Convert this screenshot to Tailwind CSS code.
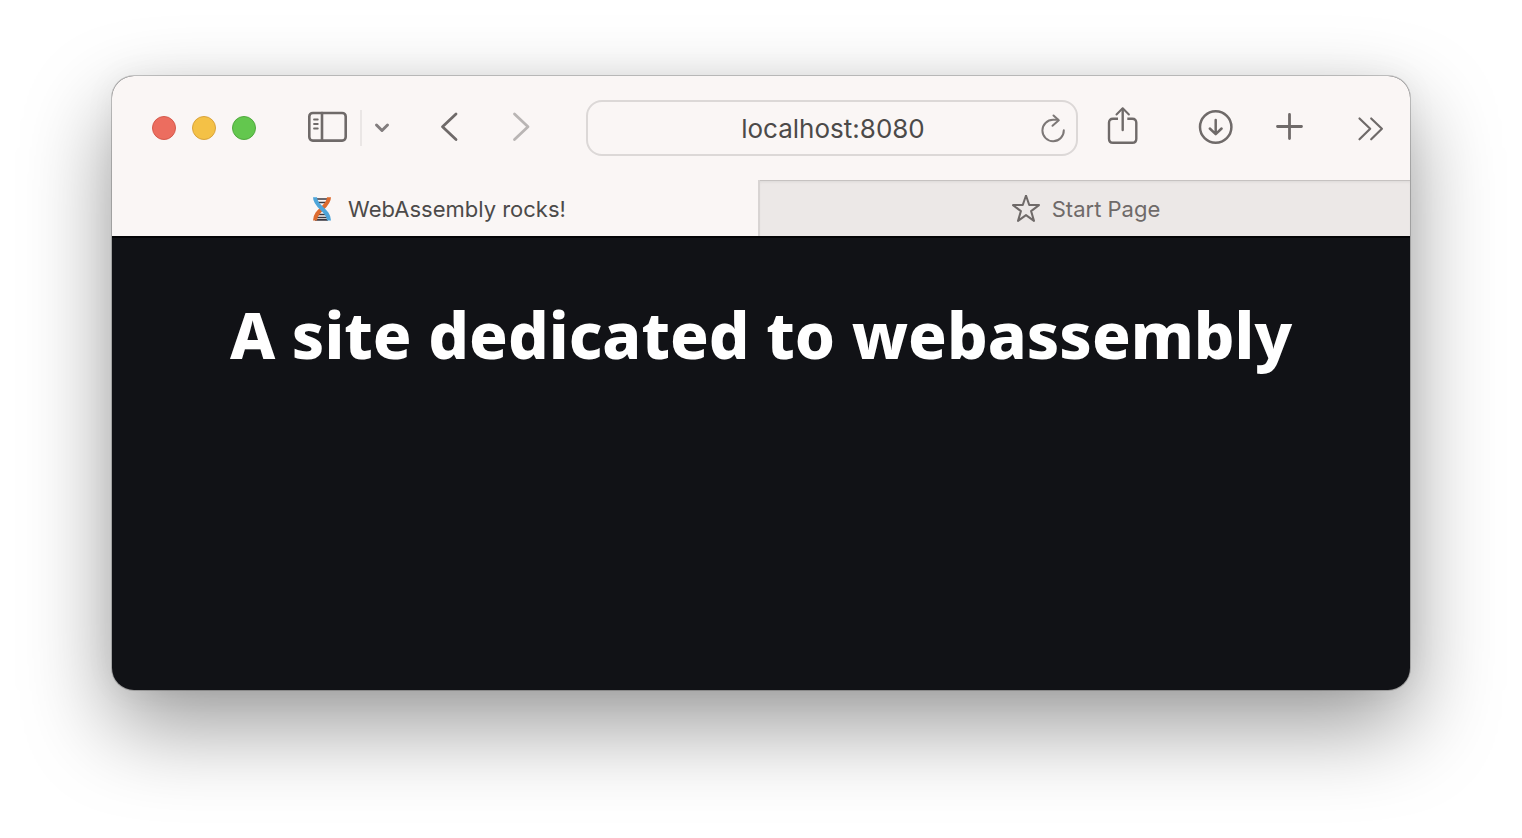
<!DOCTYPE html>
<html lang="en">
<head>
<meta charset="utf-8">
<meta name="viewport" content="width=device-width, initial-scale=1">
<title>WebAssembly rocks!</title>
<script src="https://cdn.jsdelivr.net/npm/@tailwindcss/browser@4"></script>
</head>
<body class="flex min-h-screen flex-col bg-white px-28 pt-[76px] pb-[148px] font-['Inter',sans-serif]">
<div class="flex flex-1 flex-col overflow-hidden rounded-[22px] bg-[#111216] shadow-[0_0_0_1px_rgba(0,0,0,0.2),0_36px_88px_0_rgba(0,0,0,0.4),0_0_32px_0_rgba(0,0,0,0.05)]">
  <header class="bg-[#faf6f5] text-[#6f6a69]">
    <div class="flex h-[104px] items-center pr-[25px] pl-10">
      <div class="flex gap-4">
        <button aria-label="Close" class="size-6 rounded-full border border-[#d55a4c] bg-[#ec6d5f]"></button>
        <button aria-label="Minimize" class="size-6 rounded-full border border-[#d9a33c] bg-[#f4c146]"></button>
        <button aria-label="Zoom" class="size-6 rounded-full border border-[#51a93f] bg-[#63c74e]"></button>
      </div>
      <button aria-label="Sidebar" class="ml-[52px]">
        <svg class="block h-11 w-10" viewBox="0 0 40 44" fill="none" stroke="currentColor" stroke-width="2.600" stroke-linecap="round"><rect x="1.300" y="7" width="36.400" height="27.600" rx="3.500"/><path d="M14 7v27.500"/><path stroke-width="1.800" d="M6 13.500h3.800M6 18h3.800M6 22.500h3.800"/></svg>
      </button>
      <div class="ml-3 h-9 w-0.5 bg-[#eae6e5]"></div>
      <button aria-label="Sidebar options" class="ml-3">
        <svg class="block h-11 w-4" viewBox="0 0 16 44" fill="none" stroke="#827d7e" stroke-width="3" stroke-linecap="round" stroke-linejoin="round"><path d="M2.500 19l5.500 5.500L13.500 19"/></svg>
      </button>
      <button aria-label="Back" class="ml-[50px]">
        <svg class="block h-11 w-5" viewBox="0 0 20 44" fill="none" stroke="currentColor" stroke-width="2.800" stroke-linecap="round" stroke-linejoin="round"><path d="M16 8L2.500 20.800 16 33.500"/></svg>
      </button>
      <button aria-label="Forward" disabled class="ml-[51px] text-[#b9b5b4]">
        <svg class="block h-11 w-5" viewBox="0 0 20 44" fill="none" stroke="currentColor" stroke-width="2.800" stroke-linecap="round" stroke-linejoin="round"><path d="M3.500 8L17 20.800 3.500 33.500"/></svg>
      </button>
      <div class="ml-[55px] flex h-14 min-w-0 flex-1 items-center rounded-[16px] border-2 border-[#dcd8d7] pr-2.5 pl-10">
        <input type="text" aria-label="Address" value="localhost:8080" class="min-w-0 flex-1 bg-transparent pt-0.5 text-center text-[26px] leading-8 text-[#4c4a49] outline-none">
        <button aria-label="Reload" class="text-[#7d7877]">
          <svg class="block h-11 w-7" viewBox="0 0 28 44" fill="none" stroke="currentColor" stroke-width="2" stroke-linecap="round" stroke-linejoin="round"><path d="M25.800 24.300A10.700 10.700 0 1 1 15.100 13.800h5"/><path d="M15.500 9.500l5.300 4.800-6.300 5.500"/></svg>
        </button>
      </div>
      <button aria-label="Share" class="ml-[29px]">
        <svg class="block h-11 w-8" viewBox="0 0 32 44" fill="none" stroke="currentColor" stroke-width="2.400" stroke-linecap="round" stroke-linejoin="round"><path stroke-linecap="butt" d="M11 12.800H6q-4 0-4 4v16q0 4 4 4h19.300q4 0 4-4V16.800q0-4-4-4h-5"/><path d="M15.700 24V3"/><path stroke-width="2" d="M9.500 8.500l6.200-6.300 6.200 6.300"/></svg>
      </button>
      <button aria-label="Downloads" class="ml-[59px]">
        <svg class="block h-11 w-9" viewBox="0 0 36 44" fill="none" stroke="currentColor" stroke-width="2.500" stroke-linecap="round" stroke-linejoin="round"><circle cx="17.700" cy="21" r="15.700"/><path d="M17.700 14v13.500M11.800 22.500l5.900 5.700 5.900-5.700"/></svg>
      </button>
      <button aria-label="New tab" class="ml-[42px]">
        <svg class="block h-11 w-7" viewBox="0 0 28 44" fill="none" stroke="currentColor" stroke-width="2.800" stroke-linecap="round"><path d="M13.500 8.500v24M1.500 20.500h24"/></svg>
      </button>
      <button aria-label="More" class="ml-[53px]">
        <svg class="block h-11 w-7" viewBox="0 0 28 44" fill="none" stroke="currentColor" stroke-width="2.200" stroke-linecap="round" stroke-linejoin="round"><path d="M2.500 12.500l10.700 10.300-10.700 10.500M14.200 12.500l10.700 10.300-10.700 10.500"/></svg>
      </button>
    </div>
    <nav aria-label="Tabs" class="grid h-14 grid-cols-[646fr_652fr] text-[22px] leading-7">
      <button class="flex items-center justify-center gap-4 pt-0.5 pl-2 text-[#4c4a49]">
        <svg class="h-6 w-5" viewBox="0 0 20 24" fill="none" stroke-width="4"><path stroke="#3b3940" stroke-width="1.700" d="M3 2h14M5 5.500h10M6 17.500h8M4 20.500h12M3 22.800h13"/><path stroke="#dd6b2f" d="M17 .200C17 10 3 13 3 23.500"/><path stroke="#4ea5d9" d="M3 .200C3 10 17 13 17 23.500"/></svg>
        <span>WebAssembly rocks!</span>
      </button>
      <button class="flex items-center justify-center gap-3 border-l-2 border-[#d8d4d3] bg-[#ece8e7] pt-0.5 pl-0.5 shadow-[inset_0_1px_0_#c6c2c1,inset_0_3px_3px_-1px_rgba(0,0,0,0.07)]">
        <svg class="h-7 w-7" viewBox="0 0 28 28" fill="none" stroke="currentColor" stroke-width="2" stroke-linejoin="round"><path d="M14 .500l3.200 9.400 9.800.2-7.900 6 2.900 9.800-8-5.800-8 5.800 2.900-9.800-7.900-6 9.800-.2z"/></svg>
        <span>Start Page</span>
      </button>
    </nav>
  </header>
  <main class="flex-1 border-t-2 border-[#040406] px-4 pt-14 text-center">
    <h1 class="font-['Tahoma','Noto_Sans',sans-serif] text-[64px] leading-[82px] font-extrabold text-white">A site dedicated to webassembly</h1>
  </main>
</div>
</body>
</html>
